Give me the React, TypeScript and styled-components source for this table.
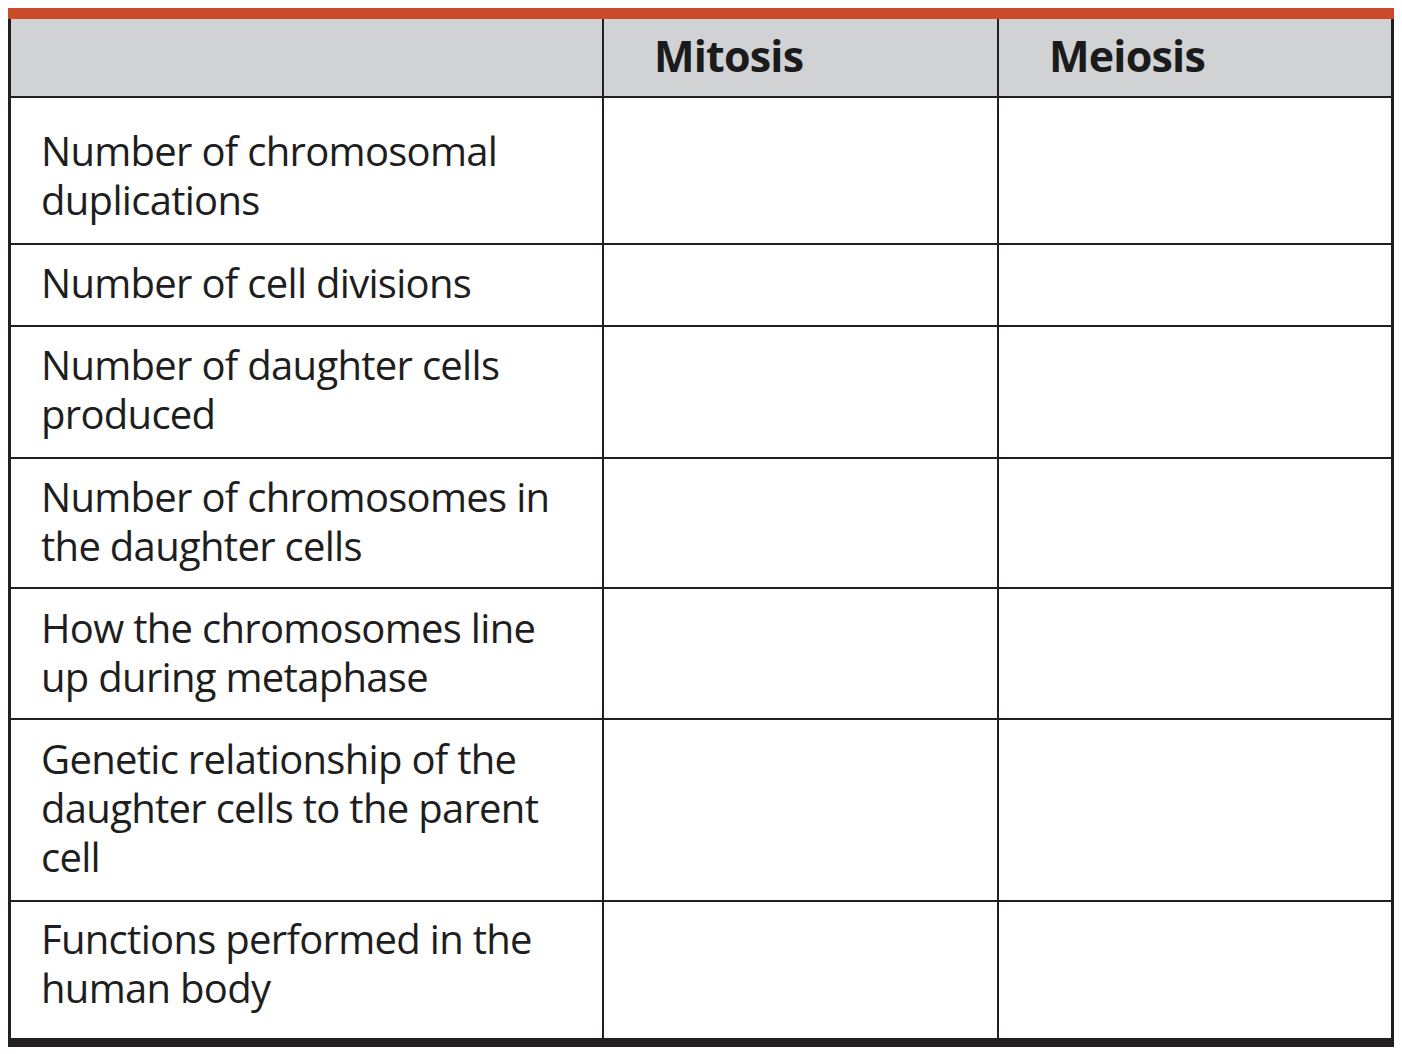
import React from "react";
import styled, { createGlobalStyle } from "styled-components";

const Global = createGlobalStyle`
  html, body { margin: 0; padding: 0; background: #ffffff; }
  body { margin: 8px; font-family: "Open Sans", "Noto Sans", "Liberation Sans", sans-serif; }
`;

const Sheet = styled.div`
  width: 1386px;
  display: flex;
  flex-direction: column;
`;

const TopBar = styled.div`
  height: 11px;
  background: #cb4a2a;
`;

const Grid = styled.div`
  display: grid;
  grid-template-columns: 591px 393px 392px;
  grid-template-rows: 77px 145px 80px 130px 128px 129px 180px 136px;
  gap: 2px;
  padding: 0 3px 9px 3px;
  background: #231f20;
`;

const HeadCell = styled.div`
  background: #d1d2d4;
  display: flex;
  align-items: center;
  padding-left: 50px;
  padding-bottom: 4px;
  font-size: 43px;
  font-weight: 700;
  color: #1b1b1b;
  letter-spacing: -0.8px;
`;

const LabelCell = styled.div<{ $top: number }>`
  background: #ffffff;
  padding: ${(p) => p.$top}px 30px 0 30px;
  font-size: 40px;
  line-height: 49px;
  color: #1e1e1e;
  letter-spacing: -0.7px;
`;

const Line = styled.div`
  white-space: nowrap;
`;

const BlankCell = styled.div`
  background: #ffffff;
`;

const rows: { lines: string[]; top: number }[] = [
  { lines: ["Number of chromosomal", "duplications"], top: 28 },
  { lines: ["Number of cell divisions"], top: 13 },
  { lines: ["Number of daughter cells", "produced"], top: 13 },
  { lines: ["Number of chromosomes in", "the daughter cells"], top: 13 },
  { lines: ["How the chromosomes line", "up during metaphase"], top: 14 },
  { lines: ["Genetic relationship of the", "daughter cells to the parent", "cell"], top: 14 },
  { lines: ["Functions performed in the", "human body"], top: 12 },
];

export default function App() {
  return (
    <>
      <Global />
      <Sheet>
        <TopBar />
        <Grid>
          <HeadCell />
          <HeadCell>Mitosis</HeadCell>
          <HeadCell>Meiosis</HeadCell>
          {rows.map((row, i) => (
            <React.Fragment key={i}>
              <LabelCell $top={row.top}>
                {row.lines.map((l, j) => (
                  <Line key={j}>{l}</Line>
                ))}
              </LabelCell>
              <BlankCell />
              <BlankCell />
            </React.Fragment>
          ))}
        </Grid>
      </Sheet>
    </>
  );
}
